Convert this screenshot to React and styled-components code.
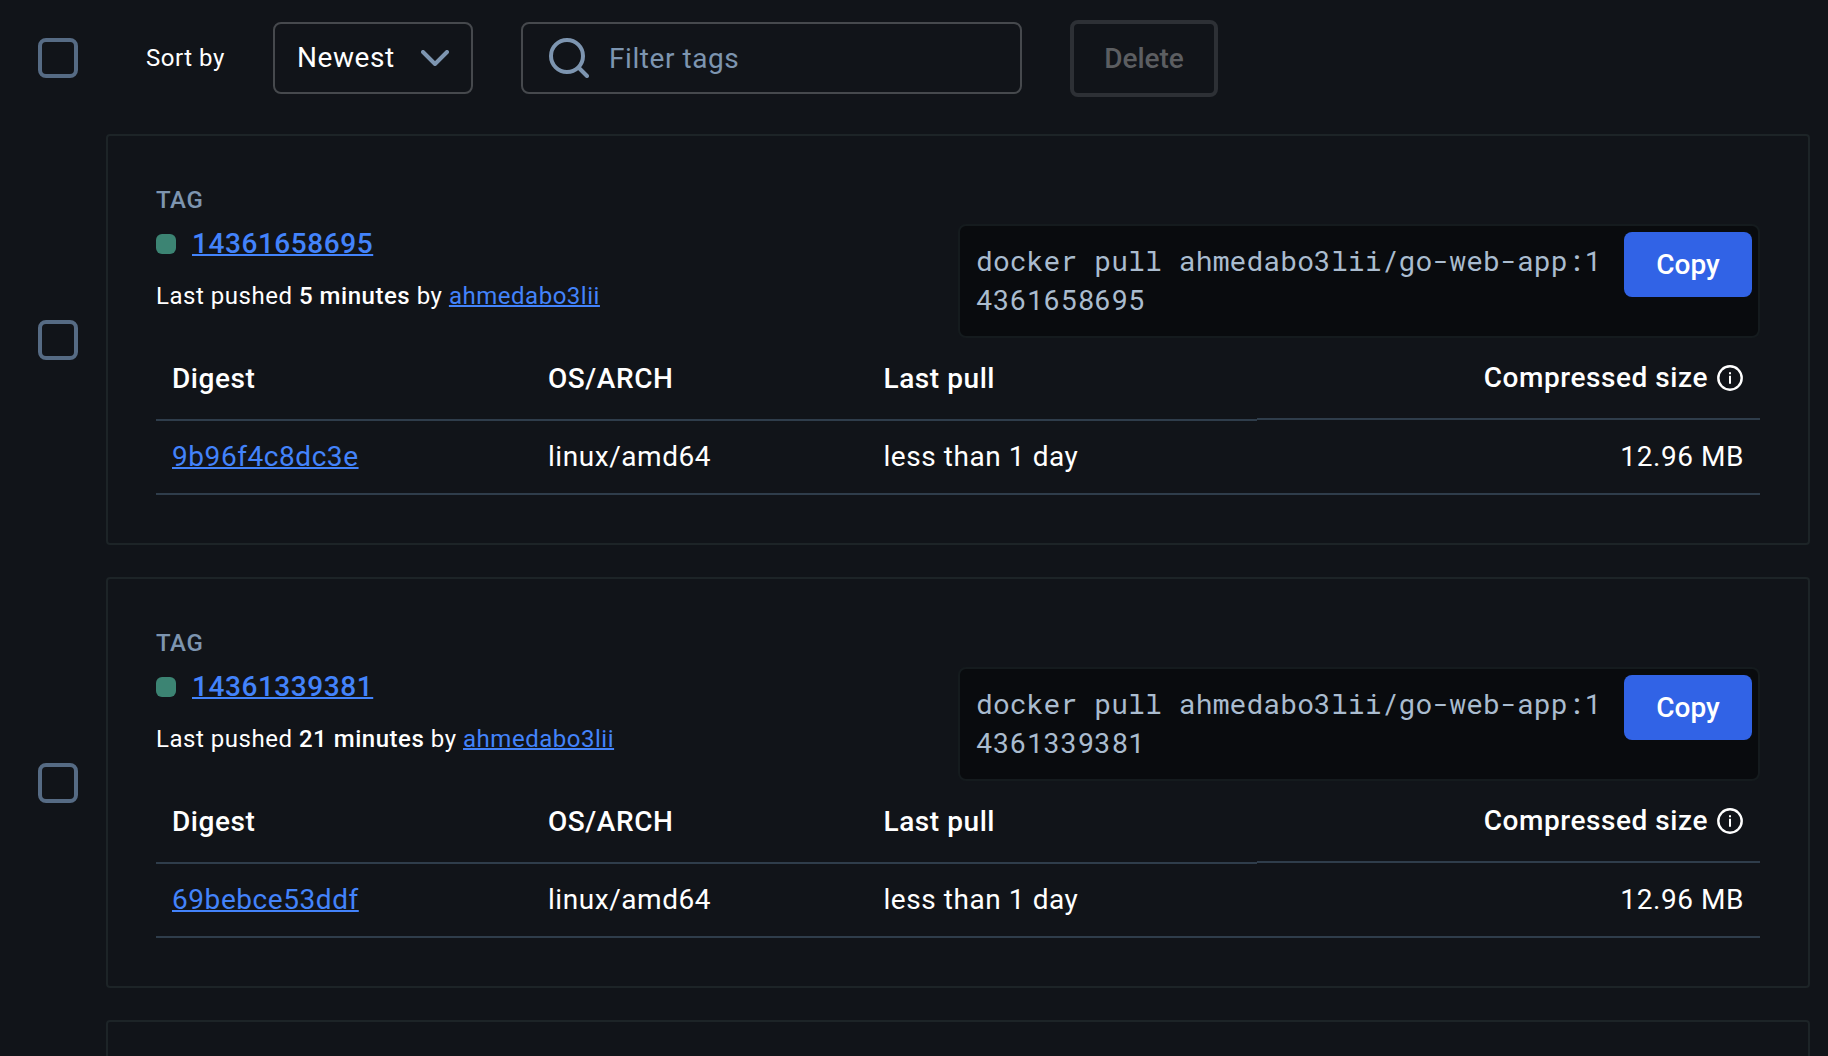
import React from "react";
import styled, { createGlobalStyle } from "styled-components";

const GlobalStyle = createGlobalStyle`
  html, body { margin: 0; padding: 0; background: #111419; }
  body { height: 1056px; overflow: hidden; }
  * { box-sizing: border-box; }
`;

const Page = styled.main`
  height: 1056px;
  overflow: hidden;
  background: #111419;
  color: #fff;
  font-family: Roboto, "Noto Sans", sans-serif;
  font-size: 28px;
  letter-spacing: 0.02em;
`;

const Toolbar = styled.header`
  display: flex;
  align-items: center;
  height: 116px;
  padding-left: 38px;
`;

const Checkbox = styled.span`
  flex: none;
  width: 40px;
  height: 40px;
  border: 4px solid #566b84;
  border-radius: 8px;
`;

const SortLabel = styled.label`
  width: 127px;
  margin-left: 68px;
  font-size: 24px;
  letter-spacing: 0.53px;
`;

const Select = styled.div`
  display: flex;
  align-items: center;
  justify-content: space-between;
  width: 200px;
  height: 72px;
  padding: 0 22px 0 22px;
  border: 2px solid #46494d;
  border-radius: 8px;
`;

const Search = styled.div`
  display: flex;
  align-items: center;
  gap: 20px;
  width: 501px;
  height: 72px;
  margin-left: 48px;
  padding-left: 26px;
  border: 2px solid #46494d;
  border-radius: 8px;
  color: #7d95b0;
`;

const Button = styled.button`
  flex: none;
  display: flex;
  align-items: center;
  justify-content: center;
  padding: 0;
  font: 500 28px Roboto, "Noto Sans", sans-serif;
  border-radius: 8px;
`;

const DeleteButton = styled(Button)`
  width: 148px;
  height: 77px;
  margin-left: 48px;
  border: 4px solid #2d3035;
  background: transparent;
  color: #5c5e61;
`;

const CopyButton = styled(Button)`
  width: 128px;
  height: 65px;
  margin: 6px 6px 0 0;
  border: 0;
  background: #3163e6;
  color: #fff;
`;

const List = styled.section`
  display: flex;
  flex-direction: column;
  gap: 32px;
  padding: 18px 18px 0 38px;
`;

const Item = styled.div`
  display: flex;
  align-items: center;
  gap: 28px;
  height: 411px;
  flex: none;

  > ${Checkbox} { margin-top: 1px; }
`;

const Card = styled.article`
  flex: 1;
  height: 100%;
  padding: 48px;
  border: 2px solid #1d2427;
  border-radius: 4px;
`;

const CardHead = styled.div`
  display: flex;
  justify-content: space-between;
  height: 154px;
`;

const Caption = styled.div`
  height: 32px;
  line-height: 32px;
  color: #7d95b0;
  font-size: 24px;
  font-weight: 500;
`;

const TagLine = styled.div`
  display: flex;
  align-items: center;
  gap: 16px;
  height: 56px;
`;

const Status = styled.span`
  width: 20px;
  height: 20px;
  border-radius: 6px;
  background: #3c8473;
`;

const Link = styled.a`
  color: #4383fb;
  font-weight: ${(p) => (p.$strong ? 500 : 400)};
  text-decoration: underline;
  text-decoration-thickness: 2px;
`;

const Pushed = styled.div`
  height: 48px;
  line-height: 48px;
  font-size: 24px;
  letter-spacing: 0.52px;

  strong { font-weight: 500; }
`;

const Command = styled.div`
  display: flex;
  justify-content: space-between;
  align-items: flex-start;
  width: 802px;
  height: 114px;
  margin-top: 40px;
  border: 2px solid #151b1e;
  border-radius: 8px;
  background: #090b0e;
`;

const Code = styled.code`
  width: 650px;
  padding: 15px 0 0 16px;
  color: #aabccf;
  font: 28px/39px "Roboto Mono", "DejaVu Sans Mono", monospace;
  letter-spacing: 0.1px;
  word-break: break-all;
`;

const Row = styled.div`
  display: grid;
  grid-template-columns: 376px 335.5px 389.5px 503px;
  height: ${(p) => (p.$head ? 83 : 74)}px;
`;

const Cell = styled.div`
  display: flex;
  align-items: center;
  justify-content: ${(p) => (p.$end ? "flex-end" : "flex-start")};
  height: ${(p) => (p.$head && p.$end ? 82 : p.$head ? 83 : 74)}px;
  padding: 0 16px ${(p) => (p.$head ? 0 : 2)}px;
  border-bottom: 2px solid #2f3d4b;
  font-weight: ${(p) => (p.$head ? 500 : 400)};
`;

const Lifted = styled.span`
  margin-bottom: 2px;
`;

const Icon = styled.svg`
  display: block;
  flex: none;
  fill: none;
  stroke: ${(p) => p.$color || "currentColor"};
`;

const InfoIcon = styled(Icon)`
  margin: 0 1px 0 9px;
`;

const Chevron = () => (
  <Icon width="28" height="16" viewBox="0 0 28 16" $color="#7d95b0" strokeWidth="4" strokeLinecap="round" strokeLinejoin="round">
    <path d="M2 2 14 14 26 2" />
  </Icon>
);

const Magnifier = () => (
  <Icon width="40" height="40" viewBox="0 0 40 40" strokeWidth="4" strokeLinecap="round">
    <circle cx="18" cy="18" r="16" />
    <path d="M30 30 38 38" />
  </Icon>
);

const Info = () => (
  <InfoIcon width="26" height="26" viewBox="0 0 26 26" strokeWidth="2.4">
    <circle cx="13" cy="13" r="11.7" />
    <path d="M13 10.7V18.7M13 7.2V9.2" strokeWidth="2" />
  </InfoIcon>
);

const tags = [
  { tag: "14361658695", pushed: "5 minutes", digest: "9b96f4c8dc3e" },
  { tag: "14361339381", pushed: "21 minutes", digest: "69bebce53ddf" },
];

function TagCard({ tag, pushed, digest }) {
  return (
    <Item>
      <Checkbox />
      <Card>
        <CardHead>
          <div>
            <Caption>TAG</Caption>
            <TagLine>
              <Status />
              <Lifted><Link $strong>{tag}</Link></Lifted>
            </TagLine>
            <Pushed>
              Last pushed <strong>{pushed}</strong> by <Link>ahmedabo3lii</Link>
            </Pushed>
          </div>
          <Command>
            <Code>{`docker pull ahmedabo3lii/go-web-app:${tag}`}</Code>
            <CopyButton>Copy</CopyButton>
          </Command>
        </CardHead>
        <Row $head>
          <Cell $head>Digest</Cell>
          <Cell $head>OS/ARCH</Cell>
          <Cell $head>Last pull</Cell>
          <Cell $head $end><Lifted>Compressed size</Lifted><Info /></Cell>
        </Row>
        <Row>
          <Cell><Link>{digest}</Link></Cell>
          <Cell>linux/amd64</Cell>
          <Cell>less than 1 day</Cell>
          <Cell $end>12.96 MB</Cell>
        </Row>
      </Card>
    </Item>
  );
}

export default function App() {
  return (
    <Page>
      <GlobalStyle />
      <Toolbar>
        <Checkbox />
        <SortLabel>Sort by</SortLabel>
        <Select><Lifted>Newest</Lifted><Chevron /></Select>
        <Search><Magnifier />Filter tags</Search>
        <DeleteButton disabled>Delete</DeleteButton>
      </Toolbar>
      <List>
        {tags.map((t) => <TagCard key={t.tag} {...t} />)}
        <Item>
          <Checkbox />
          <Card />
        </Item>
      </List>
    </Page>
  );
}
